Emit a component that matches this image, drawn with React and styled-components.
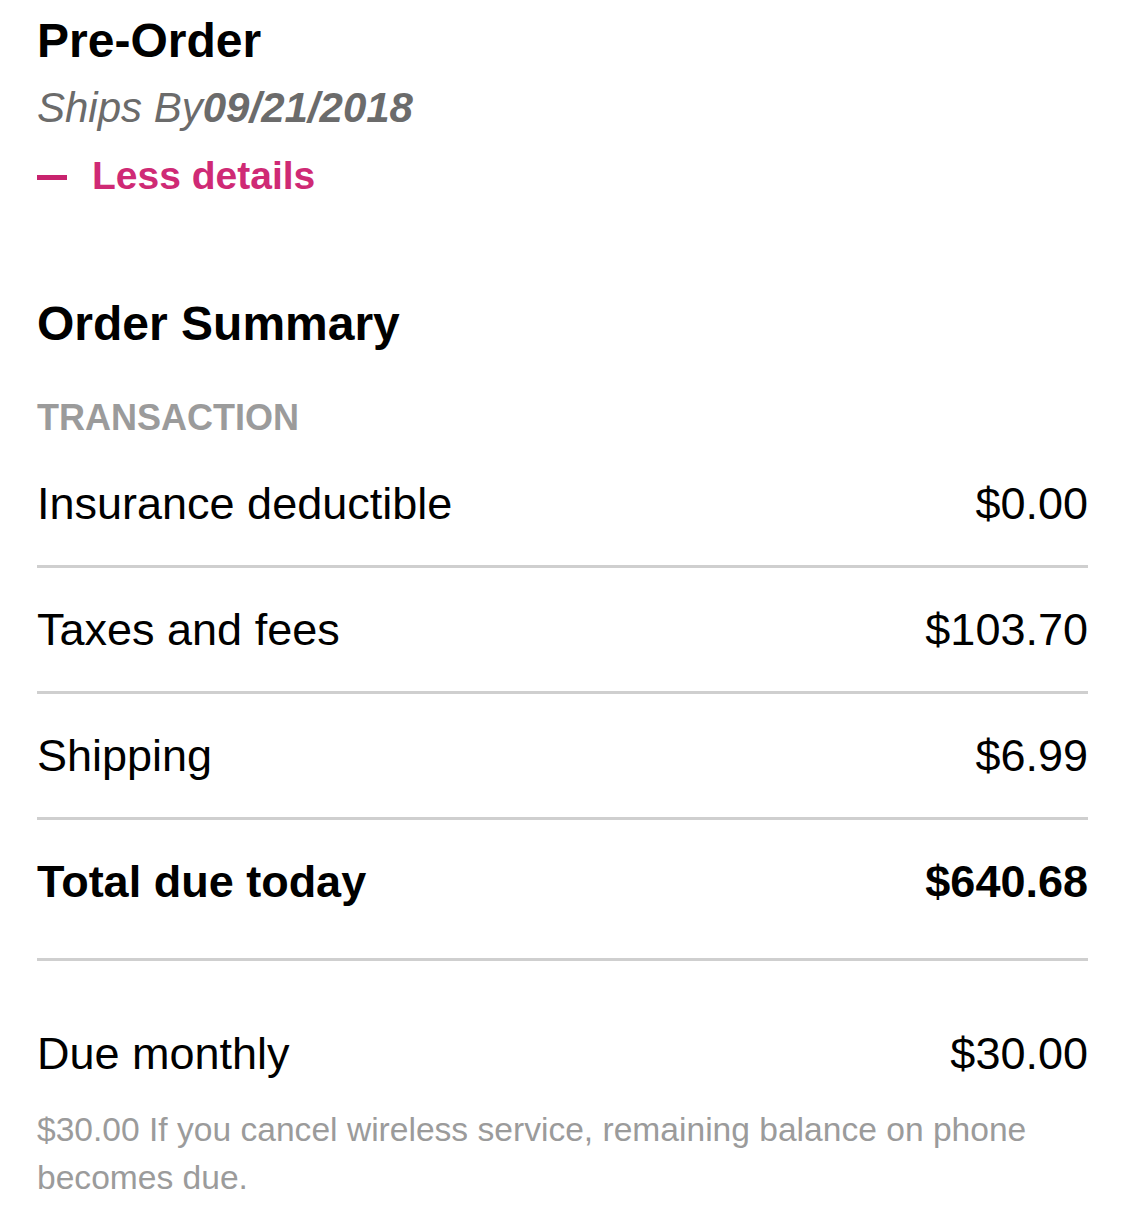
import React from "react";
import styled, { createGlobalStyle } from "styled-components";

const Global = createGlobalStyle`
  html, body { margin: 0; padding: 0; background: #fff; }
  body { font-family: "Liberation Sans", Arial, Helvetica, sans-serif; color: #000; }
`;

const Page = styled.div`
  padding: 13px 37px 30px 37px;
  display: flex;
  flex-direction: column;
`;

const Title = styled.h1`
  margin: 0;
  font-size: 48px;
  line-height: 56px;
  font-weight: 700;
  color: #000;
`;

const Ships = styled.div`
  margin-top: 14px;
  font-size: 42px;
  line-height: 50px;
  font-style: italic;
  color: #6b6b6b;
  b { font-weight: 700; }
`;

const Toggle = styled.button`
  margin-top: 20px;
  align-self: flex-start;
  display: flex;
  align-items: center;
  gap: 25px;
  padding: 0;
  border: none;
  background: none;
  font-family: inherit;
  font-size: 39px;
  line-height: 46px;
  font-weight: 700;
  color: #cf2a75;
  cursor: pointer;
`;

const Dash = styled.span`
  width: 30px;
  height: 5px;
  background: #c8236e;
  display: block;
  margin-top: 3px;
`;

const SummaryTitle = styled.h2`
  margin: 97px 0 0;
  font-size: 48px;
  line-height: 56px;
  font-weight: 700;
`;

const Section = styled.div`
  margin-top: 45px;
  font-size: 36px;
  line-height: 42px;
  font-weight: 700;
  color: #9b9b9b;
  margin-bottom: 3px;
`;

const Row = styled.div`
  display: flex;
  justify-content: space-between;
  align-items: center;
  padding: 36px 0 ${p => (p.$bold ? "50px" : "35px")};
  border-bottom: ${p => (p.$noBorder ? "none" : "3px solid #cfcfcf")};
  font-size: 45px;
  line-height: 52px;
  font-weight: ${p => (p.$bold ? 700 : 400)};
  margin-top: ${p => (p.$gap ? "31px" : "0")};
`;

const Note = styled.p`
  margin: -9px 0 0;
  font-size: 33.6px;
  line-height: 48px;
  color: #9b9b9b;
`;

const rows = [
  { label: "Insurance deductible", value: "$0.00" },
  { label: "Taxes and fees", value: "$103.70" },
  { label: "Shipping", value: "$6.99" },
  { label: "Total due today", value: "$640.68", bold: true },
];

export default function App() {
  return (
    <>
      <Global />
      <Page>
        <Title>Pre-Order</Title>
        <Ships>
          Ships By<b>09/21/2018</b>
        </Ships>
        <Toggle>
          <Dash />
          Less details
        </Toggle>
        <SummaryTitle>Order Summary</SummaryTitle>
        <Section>TRANSACTION</Section>
        {rows.map(r => (
          <Row key={r.label} $bold={r.bold}>
            <span>{r.label}</span>
            <span>{r.value}</span>
          </Row>
        ))}
        <Row $noBorder $gap>
          <span>Due monthly</span>
          <span>$30.00</span>
        </Row>
        <Note>
          $30.00 If you cancel wireless service, remaining balance on phone becomes due.
        </Note>
      </Page>
    </>
  );
}
